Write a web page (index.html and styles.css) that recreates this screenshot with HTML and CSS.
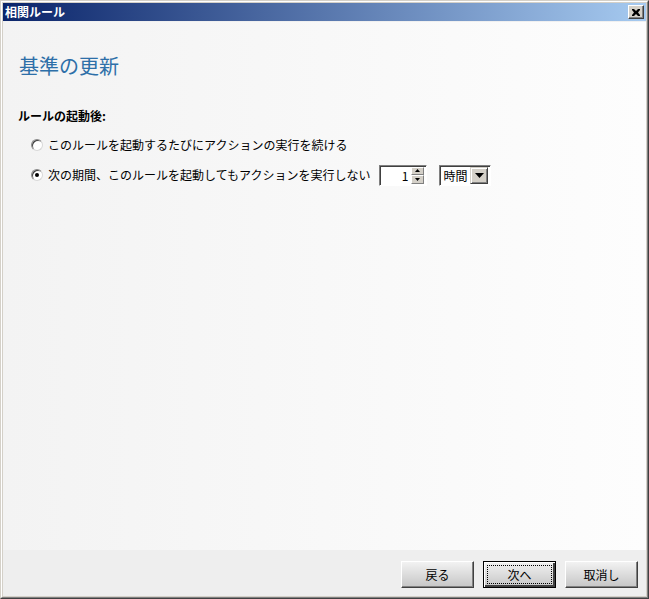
FILE: index.html
```html
<!DOCTYPE html>
<html lang="ja">
<head>
<meta charset="utf-8">
<title>相関ルール</title>
<link rel="stylesheet" href="styles.css">
</head>
<body>
<div class="window">
  <div class="frame">
    <div class="titlebar">
      <span class="title">相関ルール</span>
      <span class="close">
        <svg width="8" height="7" viewBox="0 0 8 7"><path d="M0 0h2l2 2 2-2h2v1L6 3.5 8 6v1H6L4 5 2 7H0V6l2-2.5L0 1z" fill="#000"/></svg>
      </span>
    </div>
    <div class="content">
      <h1 class="heading">基準の更新</h1>
      <div class="label">ルールの起動後:</div>
      <div class="options">
        <div class="option">
          <span class="radio"></span>
          <span class="opt-text">このルールを起動するたびにアクションの実行を続ける</span>
        </div>
        <div class="option">
          <span class="radio checked"></span>
          <span class="opt-text">次の期間、このルールを起動してもアクションを実行しない</span>
          <span class="spinner">
            <span class="spin-value">1</span>
            <span class="spin-btns">
              <span class="spin-btn"><svg width="5" height="3" viewBox="0 0 5 3"><path d="M2.5 0L5 3H0z" fill="#000"/></svg></span>
              <span class="spin-btn"><svg width="5" height="3" viewBox="0 0 5 3"><path d="M0 0h5L2.5 3z" fill="#000"/></svg></span>
            </span>
          </span>
          <span class="select">
            <span class="select-value">時間</span>
            <span class="select-btn"><svg width="9" height="5" viewBox="0 0 9 5"><path d="M0 0h9L4.5 5z" fill="#000"/></svg></span>
          </span>
        </div>
      </div>
    </div>
    <div class="footer">
      <button class="btn">戻る</button>
      <button class="btn default"><span class="focus">次へ</span></button>
      <button class="btn">取消し</button>
    </div>
  </div>
</div>
</body>
</html>
```
FILE: styles.css
```css
html, body {
  margin: 0;
  padding: 0;
  background: #ffffff;
}
body {
  font-family: "Noto Sans CJK JP", "Liberation Sans", sans-serif;
  font-size: 12px;
  color: #000;
}
.window {
  width: 649px;
  height: 599px;
  box-sizing: border-box;
  border: 1px solid;
  border-color: #d4d0c8 #404040 #404040 #d4d0c8;
}
.frame {
  height: 100%;
  box-sizing: border-box;
  border: 1px solid;
  border-color: #ffffff #808080 #808080 #ffffff;
  padding: 1px;
  background: #d4d0c8;
  display: flex;
  flex-direction: column;
}
.titlebar {
  height: 18px;
  flex: none;
  background: linear-gradient(to right, #0a246a, #a6caf0);
  display: flex;
  align-items: center;
  justify-content: space-between;
  padding: 0 2px 0 2px;
}
.title {
  color: #fff;
  font-weight: bold;
  font-size: 12px;
  line-height: 16px;
}
.close {
  width: 16px;
  height: 14px;
  box-sizing: border-box;
  background: #d4d0c8;
  border: 1px solid;
  border-color: #ffffff #404040 #404040 #ffffff;
  box-shadow: inset -1px -1px 0 #808080;
  display: flex;
  align-items: center;
  justify-content: center;
}
.content {
  flex: 1;
  background: linear-gradient(to right, #f3f3f3, #fdfdfd);
  padding: 31px 15px 0 15px;
  border-top: 1px solid #f0f0f0;
}
.heading {
  margin: 0 0 0 1px;
  font-size: 20px;
  line-height: 26px;
  font-weight: normal;
  color: #2d6fa8;
}
.label {
  margin-top: 29px;
  font-weight: bold;
  line-height: 16px;
}
.options {
  margin-top: 10px;
  padding-left: 13px;
  display: flex;
  flex-direction: column;
  gap: 8px;
}
.option {
  display: flex;
  align-items: center;
  height: 22px;
}
.radio {
  width: 12px;
  height: 12px;
  box-sizing: border-box;
  border-radius: 50%;
  border: 1px solid #8a8a8a;
  border-right-color: #d8d8d8;
  border-bottom-color: #d8d8d8;
  background: #fff;
  box-shadow: inset 1px 1px 0 #404040;
  margin-right: 5px;
  position: relative;
  flex: none;
}
.radio.checked::after {
  content: "";
  position: absolute;
  left: 3px;
  top: 3px;
  width: 4px;
  height: 4px;
  border-radius: 50%;
  background: #000;
}
.opt-text {
  line-height: 16px;
}
.spinner {
  margin-left: 9px;
  width: 48px;
  height: 21px;
  box-sizing: border-box;
  border: 1px solid;
  border-color: #808080 #ffffff #ffffff #808080;
  box-shadow: inset 1px 1px 0 #404040;
  background: #fff;
  display: flex;
  align-items: center;
  padding: 1px 2px 1px 2px;
}
.spin-value {
  flex: 1;
  text-align: right;
  padding-right: 3px;
  font-size: 12px;
}
.spin-btns {
  display: flex;
  flex-direction: column;
  width: 13px;
  height: 17px;
}
.spin-btn {
  flex: 1;
  box-sizing: border-box;
  background: #d4d0c8;
  border: 1px solid;
  border-color: #ffffff #808080 #808080 #ffffff;
  display: flex;
  align-items: center;
  justify-content: center;
}
.select {
  margin-left: 12px;
  width: 52px;
  height: 21px;
  box-sizing: border-box;
  border: 1px solid;
  border-color: #808080 #ffffff #ffffff #808080;
  box-shadow: inset 1px 1px 0 #404040;
  background: #fff;
  display: flex;
  align-items: center;
  padding: 2px 2px 1px 2px;
}
.select-value {
  flex: 1;
  padding-left: 1px;
  font-size: 12px;
}
.select-btn {
  width: 18px;
  height: 17px;
  box-sizing: border-box;
  background: #d4d0c8;
  border: 1px solid;
  border-color: #d4d0c8 #404040 #404040 #d4d0c8;
  box-shadow: inset 1px 1px 0 #ffffff, inset -1px -1px 0 #808080;
  display: flex;
  align-items: center;
  justify-content: center;
}
.footer {
  height: 46px;
  flex: none;
  background: #eeeeee;
  display: flex;
  justify-content: flex-end;
  align-items: flex-start;
  gap: 9px;
  padding: 11px 8px 0 0;
  box-sizing: border-box;
}
.btn {
  width: 73px;
  height: 27px;
  box-sizing: border-box;
  border: 1px solid;
  border-color: #ffffff #404040 #404040 #ffffff;
  box-shadow: inset -1px -1px 0 #808080;
  background: linear-gradient(to bottom, #f2f2f2, #c6c6c6);
  font-family: "Noto Sans CJK JP", "Liberation Sans", sans-serif;
  font-size: 12px;
  color: #000;
  padding: 0;
  display: flex;
  align-items: center;
  justify-content: center;
}
.btn.default {
  border: 1px solid #000;
  box-shadow: inset 1px 1px 0 #ffffff, inset -2px -2px 0 #404040;
  padding: 3px;
}
.focus {
  flex: 1;
  align-self: stretch;
  border: 1px dotted #000;
  display: flex;
  align-items: center;
  justify-content: center;
}
```
